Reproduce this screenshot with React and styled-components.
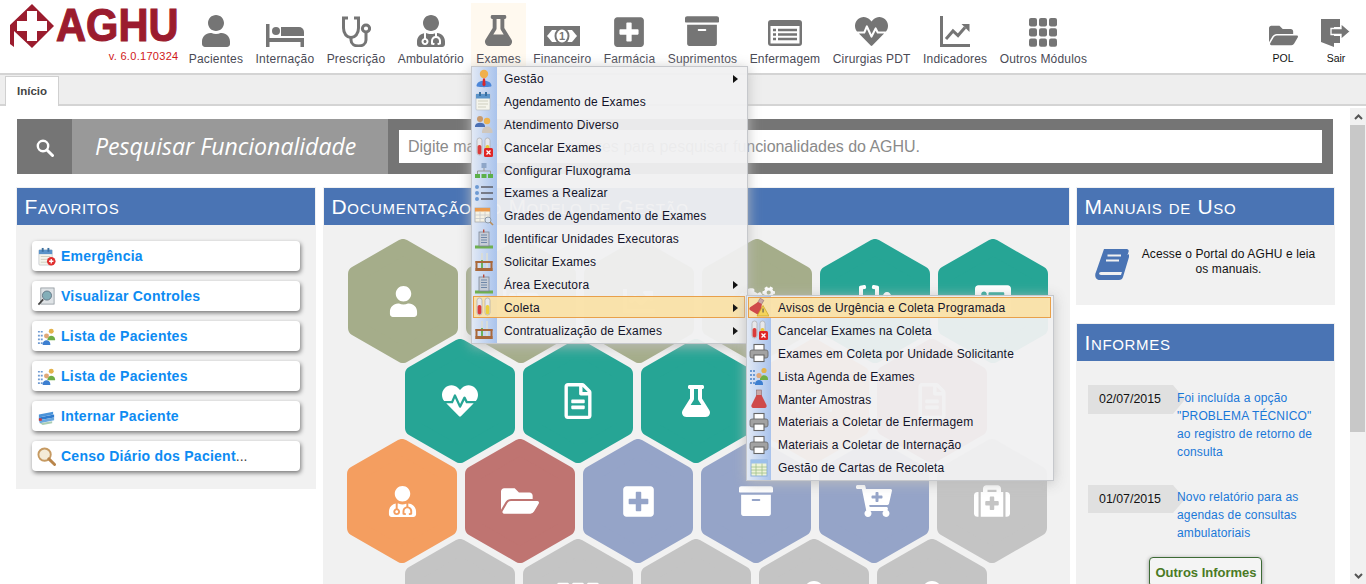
import React from 'react';
import styled, { createGlobalStyle } from 'styled-components';
import {
  FaUser, FaUserMd, FaFlask, FaPlusSquare, FaArchive, FaListAlt, FaHeartbeat, FaChartLine, FaTh,
  FaFolderOpen, FaCogs, FaStethoscope, FaRegFileAlt, FaCartPlus, FaMedkit,
} from 'react-icons/fa';

const Global = createGlobalStyle`
  html, body { margin: 0; padding: 0; height: 584px; overflow: hidden; background: #fff; }
  body { font-family: "Liberation Sans", Arial, sans-serif; }
  * { box-sizing: border-box; }
`;

const Page = styled.div`position: relative; width: 1366px; height: 584px; overflow: hidden;`;

/* ---------- header ---------- */
const Header = styled.header`display: flex; height: 73px; padding-right: 15px;`;
const LogoBlock = styled.div`width: 182.5px; flex: none; padding: 4px 0 0 9px; display: flex; flex-direction: column;`;
const LogoRow = styled.div`display: flex; height: 44px; align-items: center; gap: 2px;`;
const LogoSvg = styled.svg`flex: none;`;
const LogoText = styled.span`
  display: block; font-size: 47px; line-height: 46px; font-weight: 700; color: #9b1c2e;
  -webkit-text-stroke: 1.2px #9b1c2e; transform: scaleX(.885); transform-origin: left center; margin: -3px -20px 0 0; white-space: nowrap;
`;
const Version = styled.div`font-size: 11px; line-height: 13px; color: #d01818; text-align: right; padding-right: 4px; margin-top: 2px; letter-spacing: .3px;`;
const Nav = styled.nav`display: flex; height: 66px; padding-top: 3px;`;
const NavItem = styled.div`
  display: flex; flex-direction: column; align-items: center; height: 63px; padding: 0 ${p => (p.$active ? 5.2 : 6.2)}px; margin: 0 ${p => (p.$active ? 1 : 0)}px;
  background: ${p => (p.$active ? '#fff9ef' : 'transparent')}; color: #757575;
`;
const NavIcon = styled.div`height: 44px; display: flex; align-items: flex-end; justify-content: center;`;
const Fit = styled.span`display: flex; margin-bottom: ${p => p.$mb || 0}px;`;
const NavLabel = styled.div`font-size: 12px; line-height: 14px; margin-top: 5px; color: #4a4a55; white-space: nowrap; letter-spacing: .2px;`;
const SideNav = styled.div`display: flex; margin-left: auto; padding-top: 3px; gap: 23px;`;
const SideItem = styled.div`display: flex; flex-direction: column; align-items: center; color: #757575; width: 30px;`;
const SideLabel = styled.div`font-size: 10.5px; line-height: 12px; color: #111; margin-top: 5px;`;

/* ---------- tabs ---------- */
const TabBar = styled.div`height: 33px; background: #eee; border-top: 2px solid #d4d4d4; border-bottom: 2px solid #d4d4d4; padding: 1px 0 0 5px; display: flex;`;
const Tab = styled.div`width: 54px; height: 30px; background: #fff; border: 1px solid #d0d0d0; border-bottom: none; font-size: 11.5px; font-weight: 700; color: #444; text-align: center; line-height: 28px;`;

/* ---------- main ---------- */
const Main = styled.div`display: flex; height: 478px;`;
const Content = styled.main`width: 1350px; flex: none; padding: 13px 0 0 16px; overflow: hidden;`;
const ScrollTrack = styled.div`flex: 1; background: #f1f1f1; display: flex; flex-direction: column; margin-top: 2px; align-items: center; color: #555;`;
const ScrollBtn = styled.div`height: 17px; width: 100%; display: flex; align-items: center; justify-content: center; flex: none;`;
const ScrollThumb = styled.div`width: 15px; height: 307px; background: #c8c8c8; flex: none; align-self: flex-start;`;
const ScrollSpacer = styled.div`flex: 1;`;

const SearchBar = styled.div`display: flex; width: 1316px; height: 55px; margin-left: 1px; background: #757575;`;
const SearchIconBox = styled.div`width: 55px; display: flex; align-items: center; justify-content: center; color: #fff; padding: 3px 0 0 1px;`;
const SearchLabel = styled.div`width: 316px; background: #999; color: #fff; font: italic 23.1px/54px "Open Sans", sans-serif; padding-left: 23px; white-space: nowrap;`;
const SearchField = styled.div`flex: 1; padding: 11px;`;
const SearchInput = styled.input`
  width: 100%; height: 33px; border: none; outline: none; background: #fff; padding: 0 9px; font: 16px "Liberation Sans", Arial, sans-serif; letter-spacing: -.03px;
  &::placeholder { color: #8a8a8a; opacity: 1; }
`;

const Columns = styled.div`display: grid; grid-template-columns: 300px 747px 259px; column-gap: 7px; margin-top: 13px; align-items: start;`;
const SideColumn = styled.div`display: flex; flex-direction: column; gap: 18px; margin-left: -1px; width: 259px;`;
const Panel = styled.section`background: #f1f1f1; padding-top: 1px; ${p => p.$fill && 'min-height: 420px;'}`;
const PanelHead = styled.h2`
  margin: 0 1px; height: 37px; background: #4a74b4; color: #fff; font-size: 21px; font-weight: 400; line-height: 37px; font-variant: small-caps;
  padding-left: 7.5px; letter-spacing: .65px; white-space: nowrap; overflow: hidden;
`;

const FavList = styled.div`padding: 16px 16px 18px; display: flex; flex-direction: column; gap: 10px;`;
const FavItem = styled.div`
  height: 30px; background: #fff; border-radius: 4px; box-shadow: 1px 2px 4px rgba(0,0,0,.5); display: flex; align-items: center; padding-left: 5px;
  font-size: 14px; font-weight: 700; color: #0d8bf2; letter-spacing: .25px; gap: 5px; white-space: nowrap;
`;
const Dots = styled.span`color: #444; font-weight: 400; letter-spacing: 0;`;

const HexField = styled.div`height: 359px; padding-top: 14px; overflow: hidden;`;
const HexRow = styled.div`display: flex; gap: 8px; padding-left: ${p => p.$inset}px; & + & { margin-top: -24px; }`;
const Hex = styled.div`width: 110px; height: 124px; flex: none; display: grid; place-items: center; color: #fff; & > * { grid-area: 1 / 1; }`;
const HexShape = styled.svg`width: 110px; height: 124px;`;
const HexIcon = styled.div`display: flex; position: relative;`;

const Manual = styled.div`height: 80px; display: flex; padding: 24px 0 0 19px; gap: 12px;`;
const ManualText = styled.p`margin: -2px 0 0; width: 175px; font-size: 12px; line-height: 15px; text-align: center; color: #111; letter-spacing: .12px; white-space: nowrap;`;
const News = styled.div`padding: 24px 10px 0 12px; display: flex; flex-direction: column; gap: 24px;`;
const NewsRow = styled.div`display: flex; align-items: flex-start;`;
const DateTag = styled.div`
  width: 97px; height: ${p => p.$h}px; flex: none; background: #e0e0e0; clip-path: polygon(0 0, 85px 0, 97px 50%, 85px 100%, 0 100%);
  font-size: 12.4px; line-height: ${p => p.$h}px; padding-left: 11px; color: #111;
`;
const NewsLink = styled.a`font-size: 12px; line-height: 18px; color: #1a78d8; margin: ${p => p.$top}px 0 0 -8px; letter-spacing: .15px; position: relative;`;
const MoreWrap = styled.div`display: flex; justify-content: center; margin-top: 15px;`;
const MoreBtn = styled.div`
  width: 113px; height: 30px; border: 1px solid #3d6b35; border-radius: 4px; background: #f4f4f4; box-shadow: 0 1px 4px rgba(0,0,0,.4);
  color: #4a7a25; font-size: 13px; font-weight: 700; text-align: center; line-height: 30px; white-space: nowrap; padding-left: 1px;
`;

/* ---------- menus ---------- */
const MenuBox = styled.div`
  position: absolute; left: ${p => p.$left}px; top: ${p => p.$top}px; width: ${p => p.$width}px; padding-bottom: 1px; display: flex; flex-direction: column;
  border: 1px solid #c6c8cc; box-shadow: 0 2px 12px rgba(190,190,190,.9);
  background: linear-gradient(90deg, #e2e9f5, #a9c3ec) left top / ${p => p.$col}px 100% no-repeat, rgba(240,240,241,.95);
`;
const MenuItem = styled.div`
  height: ${p => (p.$hot ? 21.9 : 22.9)}px; flex: none; margin: ${p => (p.$hot ? '.5px' : '0')} 2px ${p => (p.$hot ? '.5px' : '0')} 1px; display: flex; align-items: center;
  border: 1px solid ${p => (p.$hot ? '#e8a04a' : 'transparent')}; background: ${p => (p.$hot ? 'rgba(250,226,168,.95)' : 'transparent')};
  font-size: 12px; color: #14142a; letter-spacing: .18px; white-space: nowrap; padding: 1px 6px 0 0;
`;
const MenuSlot = styled.span`width: ${p => p.$w}px; flex: none; display: flex; align-items: center; margin-top: -1px;`;
const Caret = styled.span`margin-left: auto; width: 0; height: 0; border-left: 5px solid #111; border-top: 4px solid transparent; border-bottom: 4px solid transparent;`;

/* ---------- drawings ---------- */
const Stethoscope = () => (
  <svg width="30" height="31" viewBox="0 0 30 31" fill="none" stroke="currentColor" strokeWidth="3">
    <path d="M7 2H2.5V12C2.5 18 6 21.5 10 21.5S17.5 18 17.5 12V2H13" />
    <path d="M10 21.5V24C10 32 25 32 25 24V16" />
    <circle cx="25" cy="12.5" r="3.6" />
  </svg>
);
const Bed = ({ w = 38 }) => (
  <svg width={w} height={w * 23 / 38} viewBox="0 0 38 23" fill="currentColor">
    <rect width="3.5" height="23" />
    <circle cx="10" cy="7" r="4" />
    <path d="M15 3H33A5 5 0 0 1 38 8V12H15Z" />
    <rect x="3" y="14" width="35" height="4" />
    <rect x="34.5" y="17" width="3.5" height="6" />
  </svg>
);
const Money = () => (
  <svg width="36" height="20" viewBox="0 0 36 20">
    <rect width="36" height="20" fill="currentColor" />
    <path d="M3 10L8 4H28L33 10L28 16H8Z" fill="#fff" />
    <ellipse cx="18" cy="10" rx="7.5" ry="8.5" fill="currentColor" />
    <ellipse cx="18" cy="10" rx="5.5" ry="6.5" fill="#fff" />
    <text x="18" y="14" fontSize="11" fontWeight="700" textAnchor="middle" fill="currentColor" fontFamily="Liberation Sans">1</text>
  </svg>
);
const CardList = () => (
  <svg width="34" height="26" viewBox="0 0 34 26">
    <rect width="34" height="26" rx="3" fill="currentColor" />
    <rect x="2.5" y="6" width="29" height="17.5" fill="#fff" />
    <path d="M5 10H8M5 14.5H8M5 19H8M10 10H29M10 14.5H29M10 19H29" stroke="currentColor" strokeWidth="2.4" />
  </svg>
);
const ChartAxes = () => (
  <svg width="30" height="31" viewBox="0 0 30 31" fill="currentColor">
    <rect width="3" height="31" />
    <rect y="28" width="30" height="3" />
    <path d="M6 23L13 15L18 19.5L25 11.5" fill="none" stroke="currentColor" strokeWidth="3" />
    <path d="M21.5 8H29.5V16Z" />
  </svg>
);
const Grid9 = () => (
  <svg width="28" height="29" viewBox="0 0 28 29" fill="currentColor">
    {[0, 10.2, 20.4].flatMap(y => [0, 10, 20].map(x => <rect key={`${x}-${y}`} x={x} y={y} width="8" height="8.4" rx="2" />))}
  </svg>
);
const Door = () => (
  <svg width="30" height="28" viewBox="0 0 30 28">
    <path d="M0 0H19V8H13V17H19V24H13V28L0 23Z" fill="currentColor" />
    <path d="M10 9.5H20V4.5L29.3 12.5L20 20.5V15.5H10Z" fill="currentColor" stroke="#fff" strokeWidth="1.3" />
  </svg>
);
const Book = () => (
  <svg width="34" height="31" viewBox="0 0 34 31" fill="#4a74b4">
    <path d="M9 0H31C33 0 34.2 1 33.5 3L27 23H6C3.5 23 3.5 26 6 26H26L32 6.5L34 5V8L28 28C27.5 30 26 31 24 31H5C1 31 -1 27 1 23Z" />
    <path d="M12.5 6.5H26M11 11.5H24" stroke="#f1f1f1" strokeWidth="2" />
  </svg>
);
const Lens = () => (
  <svg width="18" height="18" viewBox="0 0 18 18" fill="none" stroke="currentColor">
    <circle cx="7" cy="7" r="5.2" strokeWidth="2.4" />
    <path d="M11 11L16.5 16.5" strokeWidth="3" strokeLinecap="round" />
  </svg>
);
const LogoMark = () => (
  <LogoSvg width="45" height="44" viewBox="0 0 45 44">
    <path d="M1 21L23 0L45 22L23 44L5 27V43L1 40Z" fill="#9b1c2e" />
    <path d="M18 7H28V17H38V27H28V37H18V27H8V17H18Z" fill="#fff" />
  </LogoSvg>
);
const Chevron = ({ up }) => (
  <svg width="9" height="6" viewBox="0 0 9 6" fill="none" stroke="#555" strokeWidth="2">
    <path d={up ? 'M1 5L4.5 1.5L8 5' : 'M1 1L4.5 4.5L8 1'} />
  </svg>
);

const tube = (x, fill, y = 8) => (
  <g key={x + fill}>
    <rect x={x} y="1" width="5" height="17" rx="2.4" fill="#e7e7ea" stroke="#aaa" strokeWidth=".7" />
    <rect x={x + .6} y={y} width="3.8" height={17.4 - y} rx="1.8" fill={fill} />
  </g>
);
const badgeX = (
  <g>
    <rect x="10" y="11" width="9" height="9" rx="1.5" fill="#e02626" />
    <path d="M12.5 13.5L16.5 17.5M16.5 13.5L12.5 17.5" stroke="#fff" strokeWidth="1.3" />
  </g>
);
const calendar = (
  <g>
    <rect x="2" y="3" width="14" height="16" rx="1" fill="#f4f4ec" stroke="#b9bec4" strokeWidth=".7" />
    <rect x="2" y="3" width="14" height="4.5" fill="#5a93c9" />
    <rect x="5" y="1" width="2" height="4" fill="#3a6f9f" />
    <rect x="11" y="1" width="2" height="4" fill="#3a6f9f" />
    <path d="M4 10H14M4 13H14M4 16H12" stroke="#cfcfc0" strokeWidth="1" />
  </g>
);
const building = (
  <g>
    <rect x="1" y="16.5" width="18" height="3" fill="#6fb04f" />
    <rect x="5" y="3" width="10" height="14" fill="#c6ccd6" stroke="#7d8898" strokeWidth=".8" />
    <path d="M7 6H13M7 8.5H13M7 11H13M7 13.5H13" stroke="#6f87a8" strokeWidth="1.1" />
    <rect x="9" y="0.5" width="1.4" height="3" fill="#b94a3a" />
  </g>
);
const rack = (
  <g>
    <rect x="7" y="1" width="2" height="16" fill="#d8dcd8" />
    <rect x="12" y="1" width="2" height="16" fill="#d8dcd8" />
    <rect x="7" y="8" width="2" height="9" fill="#6bb35e" />
    <rect x="1.5" y="9" width="17" height="2" fill="#a9683a" />
    <rect x="1.5" y="16" width="17" height="3" fill="#a9683a" />
    <rect x="1.5" y="9" width="2" height="10" fill="#a9683a" />
    <rect x="16.5" y="9" width="2" height="10" fill="#a9683a" />
  </g>
);
const printer = (
  <g>
    <rect x="5" y="1.5" width="10" height="6" fill="#fff" stroke="#666" strokeWidth="1.1" />
    <rect x="1" y="7" width="18" height="8" rx="2" fill="#a2a2a2" stroke="#666" strokeWidth=".8" />
    <rect x="5" y="12" width="10" height="6.5" fill="#fff" stroke="#666" strokeWidth="1.1" />
  </g>
);
const listUsers = (
  <g>
    <path d="M1 5H6M1 9H6M1 13H6M1 17H6" stroke="#6d9ad3" strokeWidth="1.8" strokeDasharray="2 1" />
    <circle cx="15" cy="4.5" r="2.6" fill="#e3b24a" />
    <path d="M11 13C11 8 19 8 19 13V14H11Z" fill="#6fae45" />
    <circle cx="10" cy="9.5" r="2.6" fill="#e0a878" />
    <path d="M6 18C6 12.5 14 12.5 14 18V19H6Z" fill="#3d7fd0" />
  </g>
);
const flaskRed = (
  <g>
    <rect x="7.5" y="1" width="5" height="6" fill="#c9a8a8" stroke="#8a6a6a" strokeWidth=".6" />
    <path d="M7.5 6L2.5 16C2 18 3 19 5 19H15C17 19 18 18 17.5 16L12.5 6Z" fill="#cf4a4a" />
  </g>
);
const magnifier = (
  <g>
    <circle cx="8" cy="8" r="6.5" fill="#f4ecd8" stroke="#c69a62" strokeWidth="2" />
    <path d="M12.5 12.5L18.5 18.5" stroke="#b9854a" strokeWidth="3" strokeLinecap="round" />
  </g>
);

const icons = {
  person: (
    <g>
      <circle cx="10" cy="6" r="4.2" fill="#f0b04c" />
      <path d="M2.5 18C2.5 11 17.5 11 17.5 18C17.5 19.5 2.5 19.5 2.5 18Z" fill="#4b86d8" />
      <path d="M9 10.5H11L11.6 17L10 18.5L8.4 17Z" fill="#d9262a" />
    </g>
  ),
  calendar,
  users: (
    <g>
      <circle cx="6" cy="5" r="3" fill="#c79a6e" />
      <path d="M1 12C1 7.5 11 7.5 11 12V13H1Z" fill="#4a6fb4" />
      <circle cx="13" cy="7" r="3.2" fill="#edb34e" />
      <path d="M8 18C8 10.5 18.5 10.5 18.5 18V19H8Z" fill="#cfc7bd" />
    </g>
  ),
  tubesX: <g>{tube(3, '#d93c3c')}{tube(11, '#e6c93c')}{badgeX}</g>,
  org: (
    <g>
      <rect x="7.5" y="3" width="5" height="5" fill="#8ea6c8" />
      <path d="M10 8V11M3.5 14V11H16.5V14" stroke="#999" fill="none" />
      <rect x="1" y="14" width="5" height="4" fill="#5cb04a" /><rect x="7.5" y="14" width="5" height="4" fill="#5cb04a" /><rect x="14" y="14" width="5" height="4" fill="#5cb04a" />
    </g>
  ),
  list: (
    <g>
      <circle cx="3" cy="4" r="2" fill="#6d9ad3" /><circle cx="3" cy="10" r="2" fill="#6d9ad3" /><circle cx="3" cy="16" r="2" fill="#6d9ad3" />
      <path d="M7 4H19M7 10H19M7 16H19" stroke="#5d5d66" strokeWidth="1.3" />
    </g>
  ),
  gridSearch: (
    <g>
      <rect x="1" y="2" width="15" height="14" fill="#f5f2e4" stroke="#a3a3a3" strokeWidth=".7" />
      <rect x="1" y="2" width="15" height="3.5" fill="#ea9a4e" />
      <path d="M1 9H16M1 12.5H16M6 5.5V16M11 5.5V16" stroke="#c9c9c9" strokeWidth=".8" />
      <circle cx="14" cy="14" r="3" fill="#dce6f2" stroke="#8d9aa8" />
      <path d="M16 16L19 19" stroke="#b78d5a" strokeWidth="1.6" />
    </g>
  ),
  building,
  rack,
  tubes: <g>{tube(3, '#d93c3c')}{tube(11, '#eccf3e')}</g>,
  flaskWarn: (
    <g>
      <g transform="rotate(30 8 10) scale(.85)">{flaskRed}</g>
      <path d="M14 8.5L20 19H8Z" fill="#f4d35a" stroke="#c9a21e" strokeWidth=".7" />
      <rect x="13.5" y="11.5" width="1.1" height="4" fill="#555" />
    </g>
  ),
  printer,
  listUsers,
  flaskRed,
  table: (
    <g>
      <rect x="2" y="2" width="16" height="16" fill="#eef3d8" stroke="#8eb0dc" strokeWidth="1" />
      <rect x="2" y="2" width="16" height="3.5" fill="#9cc0ea" />
      <path d="M2 9H18M2 12H18M2 15H18M7 5.5V18M13 5.5V18" stroke="#9fbf8c" strokeWidth=".8" />
    </g>
  ),
  calPlus: (
    <g>
      {calendar}
      <circle cx="15" cy="15" r="4.5" fill="#e02f2f" />
      <path d="M12.7 15H17.3M15 12.7V17.3" stroke="#fff" strokeWidth="1.4" />
    </g>
  ),
  docSearch: (
    <g>
      <rect x="4" y="1" width="14" height="17" fill="#dfe3e6" stroke="#8a9298" strokeWidth=".8" />
      <circle cx="10.5" cy="9" r="4.8" fill="#83aeb8" stroke="#567" strokeWidth=".8" />
      <path d="M6.5 13L1.5 18.5" stroke="#444" strokeWidth="1.8" />
    </g>
  ),
  cards: (
    <g>
      <path d="M2 8L17 5V8L2 11Z" fill="#4c94d9" />
      <path d="M2 11L18 8V11L2 14Z" fill="#2f7ccf" />
      <path d="M2 14L18 11V14L3 17Z" fill="#6aa7df" />
      <rect x="2" y="12" width="3" height="2.5" fill="#d8342f" />
      <path d="M3 17L16 15V17L6 19Z" fill="#a9cdb4" />
    </g>
  ),
  magnifier,
};

const Ico = ({ name, size = 20 }) => (
  <svg width={size} height={size} viewBox="0 0 20 20" style={{ flex: 'none' }}>{icons[name]}</svg>
);

/* ---------- data ---------- */
const navItems = [
  ['Pacientes', <FaUser size={32} />],
  ['Internação', <Bed />],
  ['Prescrição', <Stethoscope />],
  ['Ambulatório', <FaUserMd size={32} />],
  ['Exames', <Fit $mb={1}><FaFlask size={31} /></Fit>, true],
  ['Financeiro', <Fit $mb={1}><Money /></Fit>],
  ['Farmácia', <Fit $mb={-2}><FaPlusSquare size={34} /></Fit>],
  ['Suprimentos', <Fit $mb={-1}><FaArchive size={34} /></Fit>],
  ['Enfermagem', <Fit $mb={1}><CardList /></Fit>],
  ['Cirurgias PDT', <Fit $mb={-1}><FaHeartbeat size={33} /></Fit>],
  ['Indicadores', <ChartAxes />],
  ['Outros Módulos', <Grid9 />],
];

const favs = [
  ['calPlus', 'Emergência'], ['docSearch', 'Visualizar Controles'], ['listUsers', 'Lista de Pacientes'],
  ['listUsers', 'Lista de Pacientes'], ['cards', 'Internar Paciente'],
];

const mainMenu = [
  ['person', 'Gestão', 1], ['calendar', 'Agendamento de Exames'], ['users', 'Atendimento Diverso'], ['tubesX', 'Cancelar Exames'],
  ['org', 'Configurar Fluxograma'], ['list', 'Exames a Realizar'], ['gridSearch', 'Grades de Agendamento de Exames'],
  ['building', 'Identificar Unidades Executoras'], ['rack', 'Solicitar Exames'], ['building', 'Área Executora', 1],
  ['tubes', 'Coleta', 1, 1], ['rack', 'Contratualização de Exames', 1],
];
const subMenu = [
  ['flaskWarn', 'Avisos de Urgência e Coleta Programada', 0, 1], ['tubesX', 'Cancelar Exames na Coleta'],
  ['printer', 'Exames em Coleta por Unidade Solicitante'], ['listUsers', 'Lista Agenda de Exames'], ['flaskRed', 'Manter Amostras'],
  ['printer', 'Materiais a Coletar de Enfermagem'], ['printer', 'Materiais a Coletar de Internação'], ['table', 'Gestão de Cartas de Recoleta'],
];

const OL = '#a5ad8a', TE = '#26a595', OR = '#f49e60', RE = '#bf7471', BL = '#95a4c8', GR = '#c4c4c4';
const hexRows = [
  { inset: 25, cells: [[OL, <FaUser size={31} />], [OL, <Bed w={36} />], [OL, <FaChartLine size={32} />], [OL, <FaCogs size={36} />], [TE, <FaStethoscope size={32} />], [TE, <FaListAlt size={36} />]] },
  { inset: 82, cells: [[TE, <FaHeartbeat size={36} />], [TE, <FaRegFileAlt size={36} />], [TE, <FaFlask size={32} />], [OR, <Bed w={36} />], [RE, <FaRegFileAlt size={36} />]] },
  { inset: 24, cells: [[OR, <FaUserMd size={31} />], [RE, <FaFolderOpen size={38} />], [BL, <FaPlusSquare size={35} />], [BL, <FaArchive size={34} />], [BL, <FaCartPlus size={36} />], [GR, <FaMedkit size={36} />]] },
  { inset: 82, cells: [[GR, null], [GR, <FaTh size={42} />], [GR, null], [GR, <FaUserMd size={40} />], [GR, <FaUser size={40} />]] },
];

const HexTile = ({ color, icon }) => (
  <Hex>
    <HexShape viewBox="0 0 110 124">
      <polygon points="55,8 102,35 102,89 55,116 8,89 8,35" fill={color} stroke={color} strokeWidth="16" strokeLinejoin="round" />
    </HexShape>
    <HexIcon>{icon}</HexIcon>
  </Hex>
);

const MenuRows = ({ rows, slot }) => rows.map(([icon, label, caret, hot]) => (
  <MenuItem key={label} $hot={!!hot}>
    <MenuSlot $w={slot}><Ico name={icon} /></MenuSlot>
    <span>{label}</span>
    {caret ? <Caret /> : null}
  </MenuItem>
));

export default function App() {
  return (
    <Page>
      <Global />
      <Header>
        <LogoBlock>
          <LogoRow><LogoMark /><LogoText>AGHU</LogoText></LogoRow>
          <Version>v. 6.0.170324</Version>
        </LogoBlock>
        <Nav>
          {navItems.map(([label, icon, active]) => (
            <NavItem key={label} $active={active}>
              <NavIcon>{icon}</NavIcon>
              <NavLabel>{label}</NavLabel>
            </NavItem>
          ))}
        </Nav>
        <SideNav>
          <SideItem><NavIcon><Fit $mb={-3}><FaFolderOpen size={29} /></Fit></NavIcon><SideLabel>POL</SideLabel></SideItem>
          <SideItem><NavIcon><Door /></NavIcon><SideLabel>Sair</SideLabel></SideItem>
        </SideNav>
      </Header>
      <TabBar><Tab>Início</Tab></TabBar>
      <Main>
        <Content>
          <SearchBar>
            <SearchIconBox><Lens /></SearchIconBox>
            <SearchLabel>Pesquisar Funcionalidade</SearchLabel>
            <SearchField><SearchInput readOnly placeholder="Digite mais de três caracteres para pesquisar funcionalidades do AGHU." /></SearchField>
          </SearchBar>
          <Columns>
            <Panel>
              <PanelHead>Favoritos</PanelHead>
              <FavList>
                {favs.map(([icon, label], i) => (
                  <FavItem key={i}><Ico name={icon} size={19} /><span>{label}</span></FavItem>
                ))}
                <FavItem><Ico name="magnifier" size={19} /><span>Censo Diário dos Pacient<Dots>...</Dots></span></FavItem>
              </FavList>
            </Panel>
            <Panel>
              <PanelHead>Documentação do Modelo de Gestão</PanelHead>
              <HexField>
                {hexRows.map((row, r) => (
                  <HexRow key={r} $inset={row.inset}>
                    {row.cells.map(([color, icon], c) => <HexTile key={c} color={color} icon={icon} />)}
                  </HexRow>
                ))}
              </HexField>
            </Panel>
            <SideColumn>
              <Panel>
                <PanelHead>Manuais de Uso</PanelHead>
                <Manual>
                  <Book />
                  <ManualText>Acesse o Portal do AGHU e leia<br />os manuais.</ManualText>
                </Manual>
              </Panel>
              <Panel $fill>
                <PanelHead>Informes</PanelHead>
                <News>
                  <NewsRow>
                    <DateTag $h={29}>02/07/2015</DateTag>
                    <NewsLink $top={4}>Foi incluída a opção<br />"PROBLEMA TÉCNICO"<br />ao registro de retorno de<br />consulta</NewsLink>
                  </NewsRow>
                  <NewsRow>
                    <DateTag $h={28}>01/07/2015</DateTag>
                    <NewsLink $top={3}>Novo relatório para as<br />agendas de consultas<br />ambulatoriais</NewsLink>
                  </NewsRow>
                </News>
                <MoreWrap><MoreBtn>Outros Informes</MoreBtn></MoreWrap>
              </Panel>
            </SideColumn>
          </Columns>
        </Content>
        <ScrollTrack>
          <ScrollBtn><Chevron up /></ScrollBtn>
          <ScrollThumb />
          <ScrollSpacer />
          <ScrollBtn><Chevron /></ScrollBtn>
        </ScrollTrack>
      </Main>
      <MenuBox $left={471} $top={66} $width={277} $col={25}>
        <MenuRows rows={mainMenu} slot={30} />
        <MenuBox $left={274} $top={228} $width={308} $col={24}>
          <MenuRows rows={subMenu} slot={29} />
        </MenuBox>
      </MenuBox>
    </Page>
  );
}
